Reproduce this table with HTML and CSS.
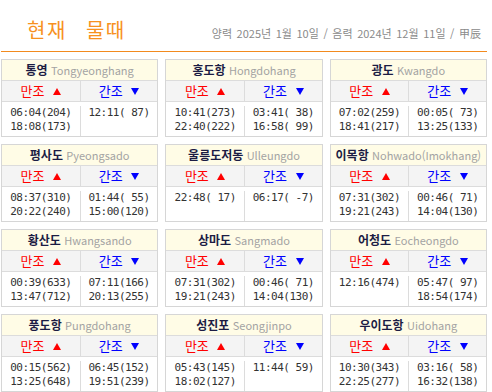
FILE: index.html
```html
<!DOCTYPE html>
<html lang="ko">
<head>
<meta charset="utf-8">
<title>현재 물때</title>
<link rel="stylesheet" href="styles.css">
</head>
<body>
<div class="page">
  <div class="top">
    <h1 class="title">현재 물때</h1>
    <div class="date">양력 2025년 1월 10일 / 음력 2024년 12월 11일 / 甲辰</div>
  </div>
  <div class="grid">
    <div class="card">
      <div class="card-h"><b>통영</b> <span>Tongyeonghang</span></div>
      <div class="cols sub"><div class="hi">만조 <i class="up"></i></div><div class="lo">간조 <i class="down"></i></div></div>
      <div class="cols data"><div>06:04(204)<br>18:08(173)</div><div>12:11( 87)</div></div>
    </div>
    <div class="card">
      <div class="card-h"><b>홍도항</b> <span>Hongdohang</span></div>
      <div class="cols sub"><div class="hi">만조 <i class="up"></i></div><div class="lo">간조 <i class="down"></i></div></div>
      <div class="cols data"><div>10:41(273)<br>22:40(222)</div><div>03:41( 38)<br>16:58( 99)</div></div>
    </div>
    <div class="card">
      <div class="card-h"><b>광도</b> <span>Kwangdo</span></div>
      <div class="cols sub"><div class="hi">만조 <i class="up"></i></div><div class="lo">간조 <i class="down"></i></div></div>
      <div class="cols data"><div>07:02(259)<br>18:41(217)</div><div>00:05( 73)<br>13:25(133)</div></div>
    </div>
    <div class="card">
      <div class="card-h"><b>평사도</b> <span>Pyeongsado</span></div>
      <div class="cols sub"><div class="hi">만조 <i class="up"></i></div><div class="lo">간조 <i class="down"></i></div></div>
      <div class="cols data"><div>08:37(310)<br>20:22(240)</div><div>01:44( 55)<br>15:00(120)</div></div>
    </div>
    <div class="card">
      <div class="card-h"><b>울릉도저동</b> <span>Ulleungdo</span></div>
      <div class="cols sub"><div class="hi">만조 <i class="up"></i></div><div class="lo">간조 <i class="down"></i></div></div>
      <div class="cols data"><div>22:48( 17)</div><div>06:17( -7)</div></div>
    </div>
    <div class="card">
      <div class="card-h"><b>이목항</b> <span>Nohwado(Imokhang)</span></div>
      <div class="cols sub"><div class="hi">만조 <i class="up"></i></div><div class="lo">간조 <i class="down"></i></div></div>
      <div class="cols data"><div>07:31(302)<br>19:21(243)</div><div>00:46( 71)<br>14:04(130)</div></div>
    </div>
    <div class="card">
      <div class="card-h"><b>황산도</b> <span>Hwangsando</span></div>
      <div class="cols sub"><div class="hi">만조 <i class="up"></i></div><div class="lo">간조 <i class="down"></i></div></div>
      <div class="cols data"><div>00:39(633)<br>13:47(712)</div><div>07:11(166)<br>20:13(255)</div></div>
    </div>
    <div class="card">
      <div class="card-h"><b>상마도</b> <span>Sangmado</span></div>
      <div class="cols sub"><div class="hi">만조 <i class="up"></i></div><div class="lo">간조 <i class="down"></i></div></div>
      <div class="cols data"><div>07:31(302)<br>19:21(243)</div><div>00:46( 71)<br>14:04(130)</div></div>
    </div>
    <div class="card">
      <div class="card-h"><b>어청도</b> <span>Eocheongdo</span></div>
      <div class="cols sub"><div class="hi">만조 <i class="up"></i></div><div class="lo">간조 <i class="down"></i></div></div>
      <div class="cols data"><div>12:16(474)</div><div>05:47( 97)<br>18:54(174)</div></div>
    </div>
    <div class="card">
      <div class="card-h"><b>풍도항</b> <span>Pungdohang</span></div>
      <div class="cols sub"><div class="hi">만조 <i class="up"></i></div><div class="lo">간조 <i class="down"></i></div></div>
      <div class="cols data"><div>00:15(562)<br>13:25(648)</div><div>06:45(152)<br>19:51(239)</div></div>
    </div>
    <div class="card">
      <div class="card-h"><b>성진포</b> <span>Seongjinpo</span></div>
      <div class="cols sub"><div class="hi">만조 <i class="up"></i></div><div class="lo">간조 <i class="down"></i></div></div>
      <div class="cols data"><div>05:43(145)<br>18:02(127)</div><div>11:44( 59)</div></div>
    </div>
    <div class="card">
      <div class="card-h"><b>우이도항</b> <span>Uidohang</span></div>
      <div class="cols sub"><div class="hi">만조 <i class="up"></i></div><div class="lo">간조 <i class="down"></i></div></div>
      <div class="cols data"><div>10:30(343)<br>22:25(277)</div><div>03:16( 58)<br>16:32(138)</div></div>
    </div>
  </div>
</div>
</body>
</html>
```
FILE: styles.css
```css
body {
  margin: 0;
  background: #fff;
  font-family: "Noto Sans CJK KR", "Noto Sans", sans-serif;
}
.page {
  width: 486px;
  margin-left: 1px;
}
.top {
  display: flex;
  justify-content: space-between;
  align-items: baseline;
  height: 52px;
  box-sizing: border-box;
  padding: 20px 6px 0 26px;
  border-bottom: 1px solid #f28a1e;
}
.title {
  margin: 0;
  font-size: 20px;
  line-height: 20px;
  font-weight: normal;
  color: #f7911f;
  letter-spacing: 1.5px;
  word-spacing: 12px;
}
.date {
  font-size: 11px;
  color: #8a8a8a;
  word-spacing: 1.5px;
}
.grid {
  display: grid;
  grid-template-columns: repeat(3, 1fr);
  gap: 7px;
  margin-top: 7px;
}
.card {
  border: 1px solid #d6d6d6;
}
.card-h {
  height: 20px;
  background: #fffce6;
  border-bottom: 1px solid #dcdcdc;
  text-align: center;
  font-size: 12px;
  line-height: 20px;
  white-space: nowrap;
}
.card-h b {
  color: #1c1c44;
}
.card-h span {
  color: #a3a3a3;
  font-size: 11px;
}
.cols {
  display: grid;
  grid-template-columns: 1fr 1fr;
}
.cols > div + div {
  border-left: 1px solid #dcdcdc;
}
.sub {
  height: 20px;
  background: #f4f4f4;
  border-bottom: 1px solid #dcdcdc;
  font-size: 13px;
  line-height: 20px;
  text-align: center;
}
.hi { color: #ff0000; }
.lo { color: #0000ff; }
.up, .down {
  display: inline-block;
  width: 0;
  height: 0;
  margin-left: 5px;
  border-left: 4px solid transparent;
  border-right: 4px solid transparent;
  vertical-align: 1px;
}
.up { border-bottom: 7px solid #ff0000; }
.down { border-top: 7px solid #0000ff; }
.data {
  height: 34px;
  box-sizing: border-box;
  padding-top: 4px;
}
.data > div {
  font-family: "DejaVu Sans Mono", monospace;
  font-size: 11px;
  letter-spacing: -0.5px;
  line-height: 14px;
  color: #333;
  text-align: center;
  white-space: pre;
}
```
